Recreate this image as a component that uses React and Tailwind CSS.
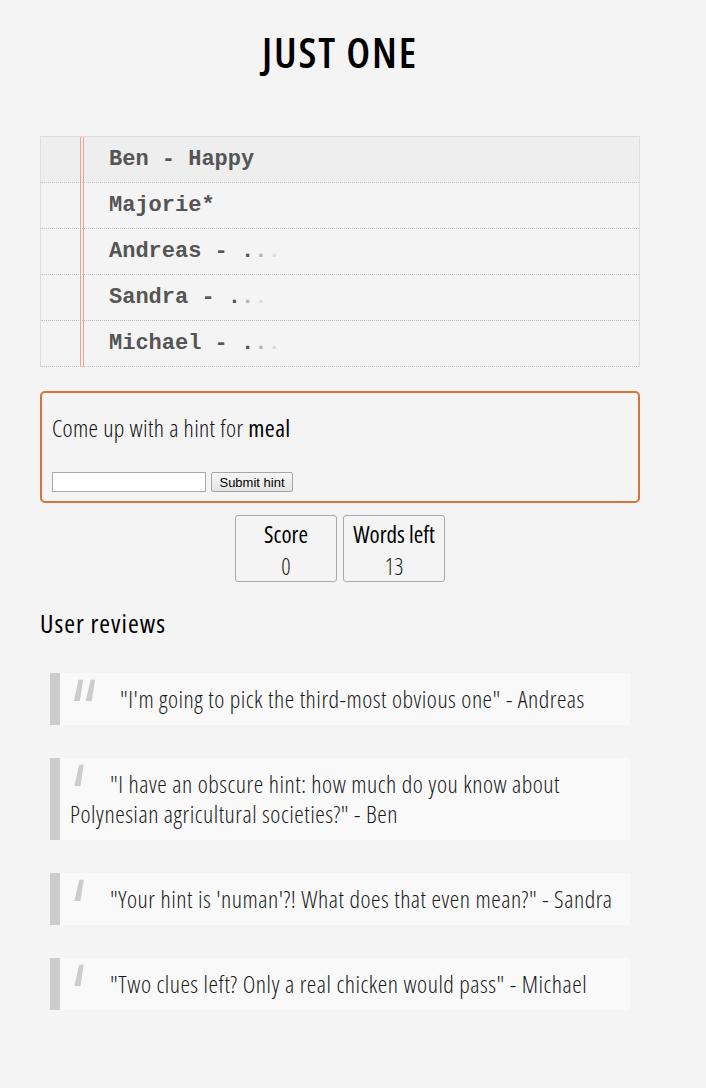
const players = [
  { name: "Ben", hint: "Happy", active: true },
  { name: "Majorie*", hint: null },
  { name: "Andreas", hint: "..." },
  { name: "Sandra", hint: "..." },
  { name: "Michael", hint: "..." },
];

const reviews = [
  { text: "\"I'm going to pick the third-most obvious one\" - Andreas", double: true },
  { text: "\"I have an obscure hint: how much do you know about Polynesian agricultural societies?\" - Ben" },
  { text: "\"Your hint is 'numan'?! What does that even mean?\" - Sandra" },
  { text: "\"Two clues left? Only a real chicken would pass\" - Michael" },
];

function Dots() {
  return (
    <span>
      <span className="text-[#555]">.</span>
      <span className="text-[#b5b5b5]">.</span>
      <span className="text-[#dcdcdc]">.</span>
    </span>
  );
}

function Quote({ double }) {
  return (
    <span className={`relative inline-block h-[1px] align-top ${double ? "w-[50px]" : "w-[40px]"}`}>
      <span className="absolute left-[7px] top-[-50px] text-[66px] leading-none font-['Liberation_Sans',sans-serif] text-[#cccccc] rotate-180 scale-y-150 -skew-x-[16deg] select-none">
        {double ? '"' : "'"}
      </span>
    </span>
  );
}

export default function App() {
  return (
    <div className="min-h-[1088px] bg-[#f4f4f4] font-['Open_Sans',sans-serif] font-stretch-condensed text-[#1a1a1a]">
      <div className="ml-[40px] w-[600px] pb-[40px]">
        <div className="flex h-[104px] items-center justify-center">
          <h1 className="text-[42px] font-semibold leading-none tracking-[1.8px] text-black">JUST ONE</h1>
        </div>

        <div className="relative mt-[32px] border-t border-r border-l border-[#dddddd] font-['Liberation_Mono',monospace] text-[22px] font-bold text-[#555555]">
          <div className="pointer-events-none absolute top-0 bottom-0 left-[39px] w-[4px] border-l border-r border-[#f2a293]" />
          {players.map((p, i) => (
            <div
              key={i}
              className={`flex h-[46px] items-center border-b border-dotted border-[#c4c4c4] pl-[68px] ${p.active ? "bg-[#eeeeee]" : "bg-[#f4f4f4]"}`}
            >
              <span className="font-stretch-normal">
                {p.hint === null ? (
                  p.name
                ) : p.hint === "..." ? (
                  <>
                    {p.name} - <Dots />
                  </>
                ) : (
                  `${p.name} - ${p.hint}`
                )}
              </span>
            </div>
          ))}
        </div>

        <div className="mt-[24px] h-[112px] rounded-[5px] border-2 border-[#d4763c] px-[10px] pt-[17px]">
          <p className="text-[24px] font-light leading-[36px] tracking-[0.35px] text-[#111]">
            Come up with a hint for <span className="font-medium text-black">meal</span>
          </p>
          <div className="mt-[26px] flex items-center gap-[5px] font-['Liberation_Sans',sans-serif] font-stretch-normal">
            <input
              type="text"
              className="h-[20px] w-[154px] border border-[#a9a9a9] bg-white px-[2px] text-[13px] outline-none"
            />
            <button className="h-[20px] w-[82px] rounded-[2px] border border-[#a6a6a6] bg-gradient-to-b from-[#f6f6f6] to-[#e4e4e4] text-[13px] leading-none text-black">
              Submit hint
            </button>
          </div>
        </div>

        <div className="mt-[12px] flex justify-center gap-[6px]">
          <div className="flex h-[67px] w-[102px] flex-col items-center justify-center rounded-[3px] border border-[#a8a8a8] pt-[3px]">
            <span className="text-[23px] font-medium leading-[32px] text-black">Score</span>
            <span className="text-[23px] font-light leading-[32px] text-[#222]">0</span>
          </div>
          <div className="flex h-[67px] w-[102px] flex-col items-center justify-center rounded-[3px] border border-[#a8a8a8] pt-[3px]">
            <span className="text-[23px] font-medium leading-[32px] text-black">Words left</span>
            <span className="text-[23px] font-light leading-[32px] text-[#222]">13</span>
          </div>
        </div>

        <h2 className="mt-[18px] flex h-[46px] items-center text-[26px] font-medium tracking-[1px] text-black">User reviews</h2>

        <div className="mt-[27px] flex flex-col gap-[33px] px-[10px]">
          {reviews.map((r, i) => (
            <blockquote
              key={i}
              className="border-l-[10px] border-[#cccccc] bg-[#f9f9f9] px-[10px] py-[11px] text-[24px] font-light leading-[30px] tracking-[0.5px] text-[#1a1a1a]"
            >
              <Quote double={r.double} />
              {r.text}
            </blockquote>
          ))}
        </div>
      </div>
    </div>
  );
}
